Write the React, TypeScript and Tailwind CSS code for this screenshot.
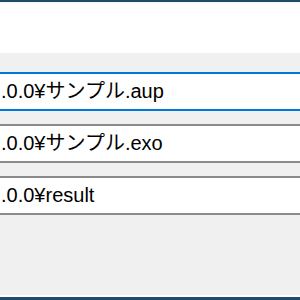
import React from 'react';

const paths = [
    { text: '.0.0¥サンプル.aup', focused: true },
    { text: '.0.0¥サンプル.exo', focused: false },
    { text: '.0.0¥result', focused: false },
];

const PathBox: React.FC<{ text: string; focused: boolean }> = ({ text, focused }) => (
    <div
        className={`h-[39px] flex items-center overflow-hidden bg-white border-y-2 ${
            focused ? 'border-[#0078d7]' : 'border-[#8a8a8a]'
        }`}
    >
        <span className="whitespace-nowrap ml-[1px] pb-[2px] text-[20px] text-black leading-none">{text}</span>
    </div>
);

export default function App() {
    return (
        <div
            className="w-[300px] h-[300px] flex flex-col bg-[#f0f0f0] overflow-hidden"
            style={{ fontFamily: '"Liberation Sans", "Noto Sans CJK JP", sans-serif' }}
        >
            <div className="h-[2px] bg-[#1d4d68]" />
            <div className="h-[1px] bg-[#f4f6f7]" />
            <div className="h-[50px] bg-white" />
            <div className="flex-1 flex flex-col gap-[13px] pt-[19px]">
                {paths.map((p) => (
                    <PathBox key={p.text} text={p.text} focused={p.focused} />
                ))}
            </div>
            <div className="h-[2px] bg-white" />
            <div className="h-[3px] bg-[#1d4d68]" />
        </div>
    );
}
